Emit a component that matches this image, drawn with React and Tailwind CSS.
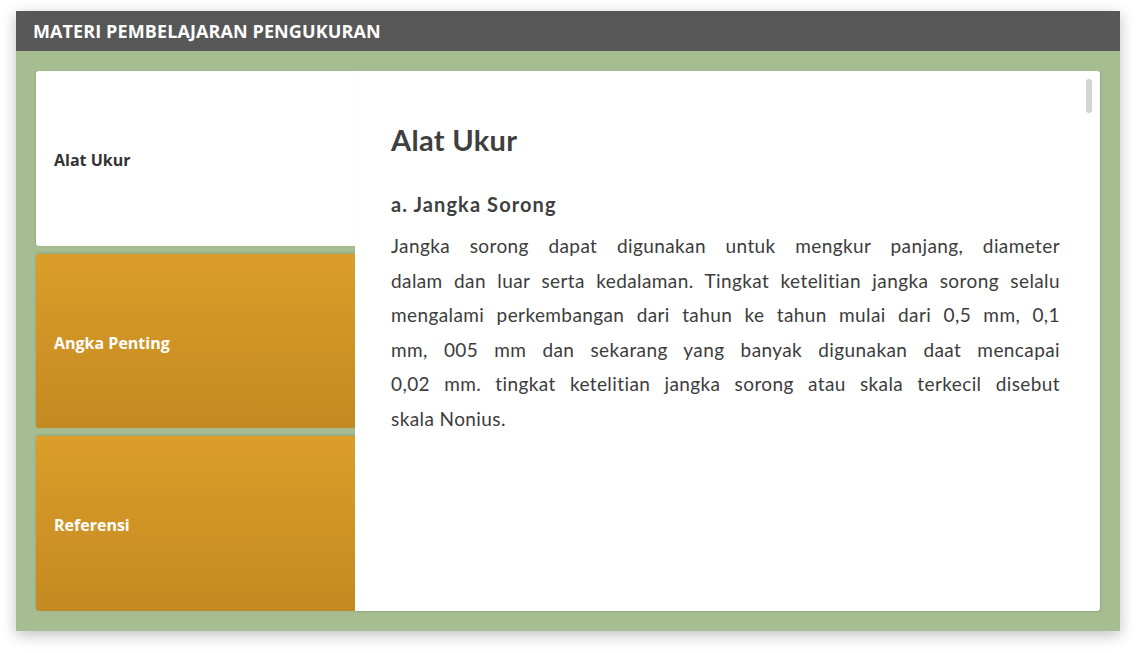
import React, { useState } from "react";

const tabs = ["Alat Ukur", "Angka Penting", "Referensi"];

// lines kept as in the reference so the justified breaks match
const lines = [
  "Jangka sorong dapat digunakan untuk mengkur panjang, diameter",
  "dalam dan luar serta kedalaman. Tingkat ketelitian jangka sorong selalu",
  "mengalami perkembangan dari tahun ke tahun mulai dari 0,5 mm, 0,1",
  "mm, 005 mm dan sekarang yang banyak digunakan daat mencapai",
  "0,02 mm. tingkat ketelitian jangka sorong atau skala terkecil disebut",
  "skala Nonius.",
];

export default function App() {
  const [active, setActive] = useState(0);

  return (
    <div className="min-h-screen bg-white pt-[11px] pl-[16px]">
      <div className="w-[1104px] h-[620px] flex flex-col shadow-[0_4px_14px_rgba(0,0,0,0.25)]">
        <div className="h-10 shrink-0 bg-[#575757] flex items-center px-[17px]">
          <h1 className="text-white font-bold text-[18px] uppercase tracking-[0.1px] font-['Open_Sans',sans-serif]">
            Materi Pembelajaran Pengukuran
          </h1>
        </div>

        <div className="flex-1 bg-[#a6bd91] p-5">
          <div className="h-full flex">
            <div className="w-[319px] shrink-0 flex flex-col gap-2">
              {tabs.map((t, i) => (
                <button
                  key={t}
                  onClick={() => setActive(i)}
                  className={`flex-1 flex items-center px-[18px] pt-[3px] text-left text-[16px] font-bold font-['Open_Sans',sans-serif] rounded-l-[3px] ${
                    active === i
                      ? "bg-white text-[#333] shadow-[-1px_0_2px_rgba(0,0,0,0.08)]"
                      : "bg-gradient-to-b from-[#dc9d29] to-[#c38a22] text-white shadow-[0_-1px_3px_rgba(0,0,0,0.15)]"
                  }`}
                >
                  {t}
                </button>
              ))}
            </div>

            <div className="relative flex-1 bg-white rounded-r-[3px] shadow-[1px_1px_2px_rgba(0,0,0,0.12)] pl-9 pr-10 pt-[54px] font-['Lato',sans-serif] text-[#3c3c3c]">
              <div className="absolute right-[8px] top-[8px] w-[6px] h-[34px] rounded-full bg-[#d4d4d4]" />
              <h2 className="text-[29px] font-bold leading-none text-[#3f3f3f] tracking-[0.3px]">Alat Ukur</h2>
              <h3 className="mt-[35px] text-[20px] font-bold text-[#3f3f3f] tracking-[1.1px]">a. Jangka Sorong</h3>
              <div className="mt-[10px] text-[19px] leading-[34.6px] tracking-[0.4px]">
                {lines.map((l, i) => (
                  <span
                    key={i}
                    className={`block text-justify ${
                      i < lines.length - 1 ? "[text-align-last:justify]" : ""
                    }`}
                  >
                    {l}
                  </span>
                ))}
              </div>
            </div>
          </div>
        </div>
      </div>
    </div>
  );
}
